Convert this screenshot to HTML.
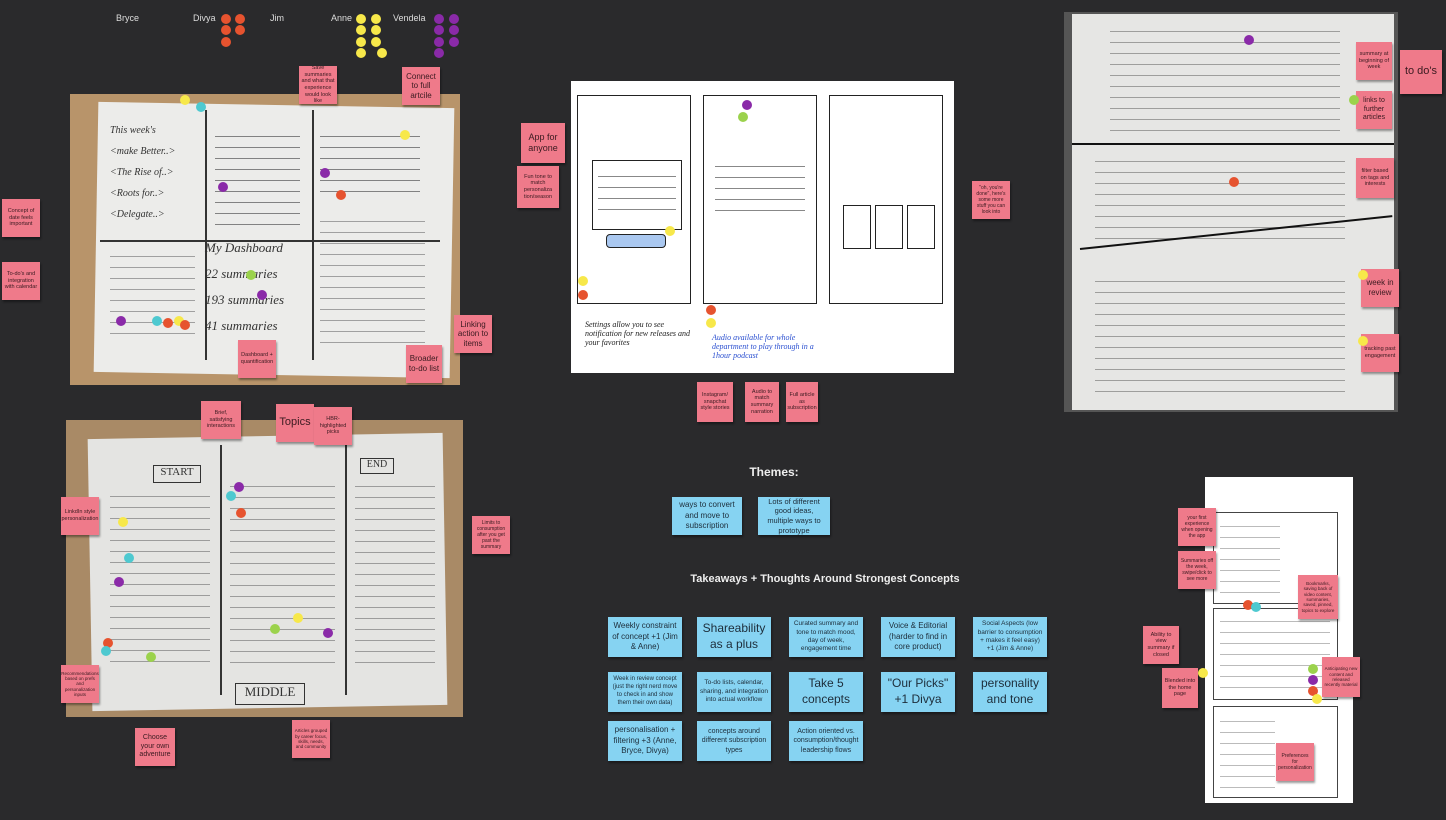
<!DOCTYPE html>
<html><head><meta charset="utf-8"><style>
body{margin:0;width:1446px;height:820px;background:#2a2a2c;position:relative;overflow:hidden;font-family:"Liberation Sans",sans-serif}
div{position:absolute;box-sizing:border-box}
.p{background:#ef7a8a;color:#3a1a20;text-align:center;display:flex;align-items:center;justify-content:center;font-size:5.5px;line-height:1.2;padding:2px;box-shadow:1px 2px 2px rgba(0,0,0,.4);overflow:hidden}
.b{background:#86d3f2;color:#1d2d3a;text-align:center;display:flex;align-items:center;justify-content:center;font-size:8px;line-height:1.3;padding:3px;box-shadow:1px 2px 2px rgba(0,0,0,.4);overflow:hidden}
.d{width:10px;height:10px;border-radius:50%}
.o{background:#e6532f}.y{background:#f7e84a}.v{background:#8a2aa8}.c{background:#4ec9d0}.g{background:#9bd24c}
.t{color:#ddd;font-size:9px}
.l{background:#333;height:1.5px}
.s{background:repeating-linear-gradient(#0000 0 6px,#555 6px 7px,#0000 7px 11px);opacity:.7}
</style></head><body>
<div class="t" style="left:116px;top:13px">Bryce</div>
<div class="t" style="left:193px;top:13px">Divya</div>
<div class="t" style="left:270px;top:13px">Jim</div>
<div class="t" style="left:331px;top:13px">Anne</div>
<div class="t" style="left:393px;top:13px">Vendela</div>
<div class="d o" style="left:221px;top:14px"></div><div class="d o" style="left:235px;top:14px"></div><div class="d o" style="left:221px;top:25px"></div><div class="d o" style="left:235px;top:25px"></div><div class="d o" style="left:221px;top:37px"></div>
<div class="d y" style="left:356px;top:14px"></div><div class="d y" style="left:371px;top:14px"></div><div class="d y" style="left:356px;top:25px"></div><div class="d y" style="left:371px;top:25px"></div><div class="d y" style="left:356px;top:37px"></div><div class="d y" style="left:371px;top:37px"></div><div class="d y" style="left:356px;top:48px"></div><div class="d y" style="left:377px;top:48px"></div>
<div class="d v" style="left:434px;top:14px"></div><div class="d v" style="left:449px;top:14px"></div><div class="d v" style="left:434px;top:25px"></div><div class="d v" style="left:449px;top:25px"></div><div class="d v" style="left:434px;top:37px"></div><div class="d v" style="left:449px;top:37px"></div><div class="d v" style="left:434px;top:48px"></div>

<!-- top-left photo -->
<div style="left:70px;top:94px;width:390px;height:291px;background:#b8946a"></div>
<div style="left:96px;top:105px;width:356px;height:270px;background:#ececea;transform:rotate(1deg)"></div>
<div class="l" style="left:100px;top:240px;width:340px"></div>
<div class="l" style="left:205px;top:110px;width:1.5px;height:250px"></div>
<div class="l" style="left:312px;top:110px;width:1.5px;height:250px"></div>
<div class="s" style="left:215px;top:130px;width:85px;height:100px"></div>
<div class="s" style="left:320px;top:130px;width:100px;height:70px"></div>
<div class="s" style="left:320px;top:215px;width:105px;height:130px;opacity:.5"></div>
<div class="s" style="left:110px;top:250px;width:85px;height:90px;opacity:.5"></div>
<div style="left:110px;top:120px;width:90px;font:italic 10px 'Liberation Serif';color:#333;line-height:2.1">This week's<br>&lt;make Better..&gt;<br>&lt;The Rise of..&gt;<br>&lt;Roots for..&gt;<br>&lt;Delegate..&gt;</div>
<div style="left:205px;top:235px;width:100px;font:italic 13px 'Liberation Serif';color:#333;line-height:2">My Dashboard<br>22 summaries<br>193 summaries<br>41 summaries</div>
<!-- bottom-left photo -->
<div style="left:66px;top:420px;width:397px;height:297px;background:#a98a66"></div>
<div style="left:90px;top:436px;width:355px;height:272px;background:#e4e4e2;transform:rotate(-1deg)"></div>
<div class="l" style="left:220px;top:445px;width:1.5px;height:250px"></div>
<div class="l" style="left:345px;top:445px;width:1.5px;height:250px"></div>
<div class="s" style="left:110px;top:490px;width:100px;height:180px;opacity:.5"></div>
<div class="s" style="left:230px;top:480px;width:105px;height:190px;opacity:.5"></div>
<div class="s" style="left:355px;top:480px;width:80px;height:190px;opacity:.5"></div>
<div style="left:235px;top:683px;width:70px;height:22px;border:1.5px solid #333;font:13px 'Liberation Serif';text-align:center;color:#333">MIDDLE</div>
<div style="left:153px;top:465px;width:48px;height:18px;border:1.5px solid #333;font:11px 'Liberation Serif';text-align:center;color:#333">START</div>
<div style="left:360px;top:458px;width:34px;height:16px;border:1.5px solid #333;font:10px 'Liberation Serif';text-align:center;color:#333">END</div>
<!-- center card -->
<div style="left:571px;top:81px;width:383px;height:292px;background:#fff"></div>
<div style="left:577px;top:95px;width:114px;height:209px;border:1.5px solid #222"></div>
<div style="left:703px;top:95px;width:114px;height:209px;border:1.5px solid #222"></div>
<div style="left:829px;top:95px;width:114px;height:209px;border:1.5px solid #222"></div>
<div style="left:592px;top:160px;width:90px;height:70px;border:1.5px solid #222"></div>
<div class="s" style="left:598px;top:170px;width:78px;height:50px"></div>
<div class="s" style="left:715px;top:160px;width:90px;height:60px"></div>
<div style="left:606px;top:234px;width:60px;height:14px;border:1.5px solid #222;background:#aac8f0;border-radius:4px"></div>
<div style="left:843px;top:205px;width:28px;height:44px;border:1.5px solid #222"></div>
<div style="left:875px;top:205px;width:28px;height:44px;border:1.5px solid #222"></div>
<div style="left:907px;top:205px;width:28px;height:44px;border:1.5px solid #222"></div>
<div style="left:585px;top:320px;width:110px;font:italic 8px 'Liberation Serif';color:#222">Settings allow you to see notification for new releases and your favorites</div>
<div style="left:712px;top:333px;width:110px;font:italic 8px 'Liberation Serif';color:#2a4fd0">Audio available for whole department to play through in a 1hour podcast</div>
<!-- right notebook -->
<div style="left:1064px;top:12px;width:334px;height:400px;background:#555"></div>
<div style="left:1072px;top:14px;width:322px;height:396px;background:#e6e6e4"></div>
<div class="s" style="left:1110px;top:25px;width:230px;height:110px;opacity:.5"></div>
<div class="s" style="left:1095px;top:155px;width:250px;height:90px;opacity:.5"></div>
<div class="s" style="left:1095px;top:275px;width:250px;height:120px;opacity:.5"></div>
<div class="l" style="left:1072px;top:143px;width:322px;height:2px;background:#111"></div>
<div style="left:1080px;top:248px;width:314px;height:2px;background:#111;transform:rotate(-6deg);transform-origin:left"></div>
<!-- bottom right -->
<div style="left:1205px;top:477px;width:148px;height:326px;background:#fff"></div>
<div style="left:1213px;top:512px;width:125px;height:92px;border:1px solid #444"></div>
<div style="left:1213px;top:608px;width:125px;height:92px;border:1px solid #444"></div>
<div style="left:1213px;top:706px;width:125px;height:92px;border:1px solid #444"></div>
<div class="s" style="left:1220px;top:520px;width:60px;height:75px;opacity:.4"></div>
<div class="s" style="left:1220px;top:615px;width:110px;height:75px;opacity:.4"></div>
<div class="s" style="left:1220px;top:715px;width:55px;height:75px;opacity:.4"></div>

<!-- pink stickies -->
<div class="p" style="left:299px;top:66px;width:38px;height:38px">Save summaries and what that experience would look like</div>
<div class="p" style="left:402px;top:67px;width:38px;height:38px;font-size:8px">Connect to full artcile</div>
<div class="p" style="left:2px;top:199px;width:38px;height:38px">Concept of date feels important</div>
<div class="p" style="left:2px;top:262px;width:38px;height:38px">To-do's and integration with calendar</div>
<div class="p" style="left:238px;top:340px;width:38px;height:38px">Dashboard + quantification</div>
<div class="p" style="left:406px;top:345px;width:36px;height:38px;font-size:8px">Broader to-do list</div>
<div class="p" style="left:454px;top:315px;width:38px;height:38px;font-size:8px">Linking action to items</div>
<div class="p" style="left:521px;top:123px;width:44px;height:40px;font-size:9px">App for anyone</div>
<div class="p" style="left:517px;top:166px;width:42px;height:42px">Fun tone to match personaliza tion/season</div>
<div class="p" style="left:972px;top:181px;width:38px;height:38px;font-size:5px">"oh, you're done", here's some more stuff you can look into</div>
<div class="p" style="left:697px;top:382px;width:36px;height:40px">Instagram/ snapchat style stories</div>
<div class="p" style="left:745px;top:382px;width:34px;height:40px">Audio to match summary narration</div>
<div class="p" style="left:786px;top:382px;width:32px;height:40px">Full article as subscription</div>
<div class="p" style="left:201px;top:401px;width:40px;height:38px">Brief, satisfying interactions</div>
<div class="p" style="left:276px;top:404px;width:38px;height:38px;font-size:11px">Topics</div>
<div class="p" style="left:314px;top:407px;width:38px;height:38px">HBR-highlighted picks</div>
<div class="p" style="left:61px;top:497px;width:38px;height:38px">LinkdIn style personalization</div>
<div class="p" style="left:472px;top:516px;width:38px;height:38px;font-size:5px">Limits to consumption after you get past the summary</div>
<div class="p" style="left:61px;top:665px;width:38px;height:38px;font-size:4.5px">Recommendations based on prefs and personalization inputs</div>
<div class="p" style="left:135px;top:728px;width:40px;height:38px;font-size:7px">Choose your own adventure</div>
<div class="p" style="left:292px;top:720px;width:38px;height:38px;font-size:4.5px">Articles grouped by career focus, skills, needs, and community</div>
<div class="p" style="left:1356px;top:42px;width:36px;height:38px">summary at beginning of week</div>
<div class="p" style="left:1400px;top:50px;width:42px;height:44px;font-size:11px">to do's</div>
<div class="p" style="left:1356px;top:91px;width:36px;height:38px;font-size:7px">links to further articles</div>
<div class="p" style="left:1356px;top:158px;width:38px;height:40px">filter based on tags and interests</div>
<div class="p" style="left:1361px;top:269px;width:38px;height:38px;font-size:8px">week in review</div>
<div class="p" style="left:1361px;top:334px;width:38px;height:38px">tracking past engagement</div>
<div class="p" style="left:1178px;top:508px;width:38px;height:38px;font-size:5px">your first experience when opening the app</div>
<div class="p" style="left:1178px;top:551px;width:38px;height:38px;font-size:5px">Summaries off the week, swipe/click to see more</div>
<div class="p" style="left:1298px;top:575px;width:40px;height:44px;font-size:4.5px">Bookmarks, saving back of video content, summaries, saved, pinned, topics to explore</div>
<div class="p" style="left:1143px;top:626px;width:36px;height:38px">Ability to view summary if closed</div>
<div class="p" style="left:1162px;top:668px;width:36px;height:40px">Blended into the home page</div>
<div class="p" style="left:1322px;top:657px;width:38px;height:40px;font-size:4.5px">Anticipating new content and released recently material</div>
<div class="p" style="left:1276px;top:743px;width:38px;height:38px;font-size:5px">Preferences for personalization</div>

<!-- themes -->
<div style="left:700px;top:465px;width:148px;text-align:center;color:#eee;font-weight:bold;font-size:12px">Themes:</div>
<div class="b" style="left:672px;top:497px;width:70px;height:38px">ways to convert and move to subscription</div>
<div class="b" style="left:758px;top:497px;width:72px;height:38px;font-size:7.5px">Lots of different good ideas, multiple ways to prototype</div>
<div style="left:600px;top:573px;width:450px;text-align:center;color:#eee;font-weight:bold;font-size:11px">Takeaways + Thoughts Around Strongest Concepts</div>
<div class="b" style="left:608px;top:617px;width:74px;height:40px">Weekly constraint of concept +1 (Jim &amp; Anne)</div>
<div class="b" style="left:697px;top:617px;width:74px;height:40px;font-size:12px">Shareability as a plus</div>
<div class="b" style="left:789px;top:617px;width:74px;height:40px;font-size:6.5px">Curated summary and tone to match mood, day of week, engagement time</div>
<div class="b" style="left:881px;top:617px;width:74px;height:40px">Voice &amp; Editorial (harder to find in core product)</div>
<div class="b" style="left:973px;top:617px;width:74px;height:40px;font-size:6.5px">Social Aspects (low barrier to consumption + makes it feel easy) +1 (Jim &amp; Anne)</div>
<div class="b" style="left:608px;top:672px;width:74px;height:40px;font-size:6px">Week in review concept (just the right nerd move to check in and show them their own data)</div>
<div class="b" style="left:697px;top:672px;width:74px;height:40px;font-size:6.5px">To-do lists, calendar, sharing, and integration into actual workflow</div>
<div class="b" style="left:789px;top:672px;width:74px;height:40px;font-size:12px">Take 5 concepts</div>
<div class="b" style="left:881px;top:672px;width:74px;height:40px;font-size:12px">"Our Picks" +1 Divya</div>
<div class="b" style="left:973px;top:672px;width:74px;height:40px;font-size:12px">personality and tone</div>
<div class="b" style="left:608px;top:721px;width:74px;height:40px">personalisation + filtering +3 (Anne, Bryce, Divya)</div>
<div class="b" style="left:697px;top:721px;width:74px;height:40px;font-size:7px">concepts around different subscription types</div>
<div class="b" style="left:789px;top:721px;width:74px;height:40px;font-size:7px">Action oriented vs. consumption/thought leadership flows</div>

<!-- scattered dots -->
<div class="d y" style="left:180px;top:95px"></div><div class="d c" style="left:196px;top:102px"></div>
<div class="d v" style="left:218px;top:182px"></div><div class="d y" style="left:400px;top:130px"></div><div class="d v" style="left:320px;top:168px"></div><div class="d o" style="left:336px;top:190px"></div>
<div class="d g" style="left:246px;top:270px"></div><div class="d v" style="left:257px;top:290px"></div><div class="d c" style="left:152px;top:316px"></div><div class="d o" style="left:163px;top:318px"></div><div class="d y" style="left:174px;top:316px"></div><div class="d v" style="left:116px;top:316px"></div><div class="d o" style="left:180px;top:320px"></div>
<div class="d g" style="left:738px;top:112px"></div><div class="d v" style="left:742px;top:100px"></div><div class="d y" style="left:665px;top:226px"></div><div class="d y" style="left:578px;top:276px"></div><div class="d o" style="left:578px;top:290px"></div><div class="d o" style="left:706px;top:305px"></div><div class="d y" style="left:706px;top:318px"></div>
<div class="d v" style="left:1244px;top:35px"></div><div class="d g" style="left:1349px;top:95px"></div><div class="d o" style="left:1229px;top:177px"></div><div class="d y" style="left:1358px;top:270px"></div><div class="d y" style="left:1358px;top:336px"></div>
<div class="d y" style="left:118px;top:517px"></div><div class="d c" style="left:226px;top:491px"></div><div class="d o" style="left:236px;top:508px"></div><div class="d v" style="left:234px;top:482px"></div><div class="d v" style="left:114px;top:577px"></div><div class="d o" style="left:103px;top:638px"></div><div class="d c" style="left:101px;top:646px"></div><div class="d g" style="left:146px;top:652px"></div><div class="d g" style="left:270px;top:624px"></div><div class="d v" style="left:323px;top:628px"></div><div class="d y" style="left:293px;top:613px"></div><div class="d c" style="left:124px;top:553px"></div>
<div class="d o" style="left:1243px;top:600px"></div><div class="d c" style="left:1251px;top:602px"></div><div class="d g" style="left:1308px;top:664px"></div><div class="d v" style="left:1308px;top:675px"></div><div class="d o" style="left:1308px;top:686px"></div><div class="d y" style="left:1312px;top:694px"></div><div class="d y" style="left:1198px;top:668px"></div>
</body></html>
